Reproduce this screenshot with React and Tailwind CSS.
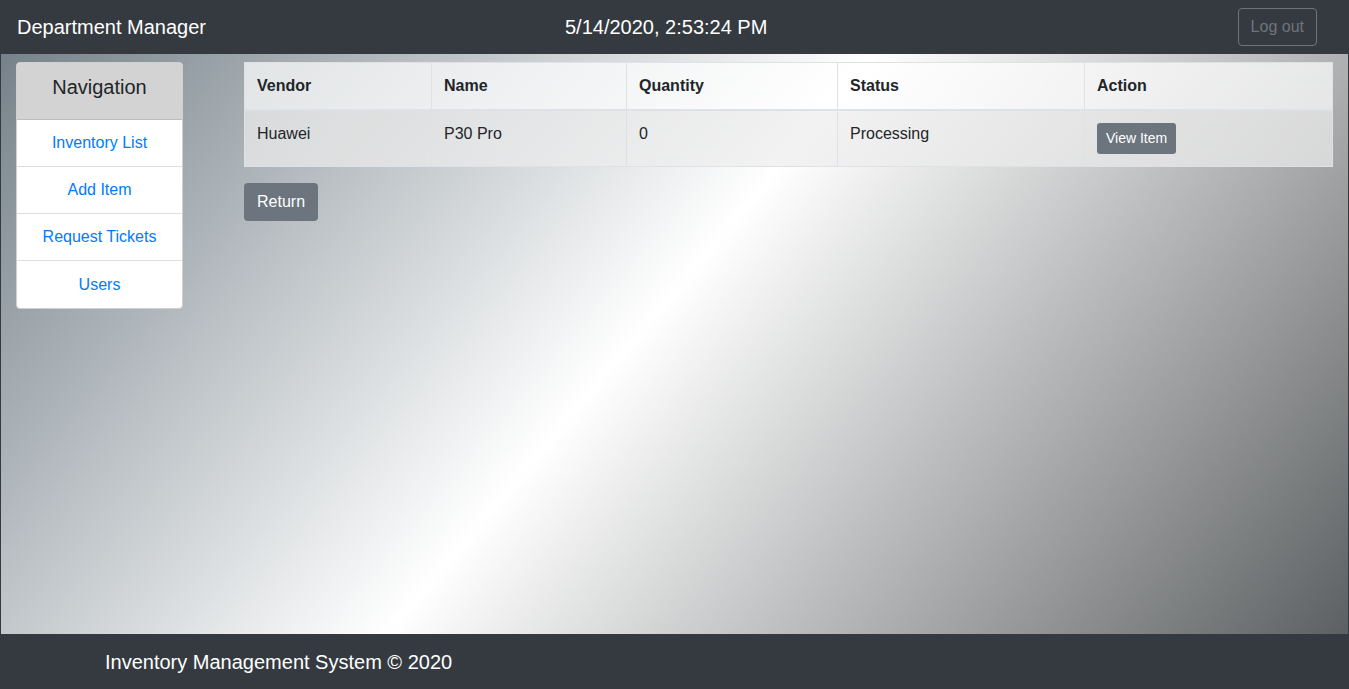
const NAV_LINKS = ['Inventory List', 'Add Item', 'Request Tickets', 'Users'];

const COLUMNS = [
  { label: 'Vendor', width: 'w-[187px]' },
  { label: 'Name', width: 'w-[195px]' },
  { label: 'Quantity', width: 'w-[211px]' },
  { label: 'Status', width: 'w-[247px]' },
  { label: 'Action', width: '' },
];

const ROWS = [{ vendor: 'Huawei', name: 'P30 Pro', quantity: 0, status: 'Processing' }];

const Header = () => (
  <header className="flex h-[54px] items-center bg-[#343a40] text-white">
    <span className="ml-4 text-[20px]">Department Manager</span>
    <span className="ml-[359px] text-[20px]">5/14/2020, 2:53:24 PM</span>
    <button
      type="button"
      className="ml-auto mr-[31px] h-[38px] rounded-[4px] border border-[#6c757d] px-3 text-[16px] text-[#6c757d]"
    >
      Log out
    </button>
  </header>
);

const Sidebar = () => (
  <aside className="w-[167px] shrink-0 overflow-hidden rounded-[4px] border border-[#d0d0d0] bg-white">
    <div className="h-[57px] border-b border-[#bdbdbd] bg-[#d3d3d3] pt-[12px] text-center text-[20px] leading-6 text-[#212529]">
      Navigation
    </div>
    {NAV_LINKS.map((link, i) => (
      <a
        key={link}
        href="#"
        className={`flex h-[47px] items-center justify-center text-[16px] text-[#007bff] ${
          i < NAV_LINKS.length - 1 ? 'border-b border-[#dedede]' : ''
        }`}
      >
        {link}
      </a>
    ))}
  </aside>
);

const ItemsTable = () => (
  <table className="w-full border-collapse bg-white/70 text-left text-[16px] text-[#212529]">
    <thead>
      <tr>
        {COLUMNS.map((col) => (
          <th
            key={col.label}
            className={`${col.width} border border-b-2 border-[#dee2e6] px-3 pb-[11px] pt-[11px] font-bold leading-6`}
          >
            {col.label}
          </th>
        ))}
      </tr>
    </thead>
    <tbody>
      {ROWS.map((row) => (
        <tr key={row.name} className="bg-black/5">
          <td className="border border-[#dee2e6] px-3 pb-[19px] pt-[11px] align-top leading-6">{row.vendor}</td>
          <td className="border border-[#dee2e6] px-3 pb-[19px] pt-[11px] align-top leading-6">{row.name}</td>
          <td className="border border-[#dee2e6] px-3 pb-[19px] pt-[11px] align-top leading-6">{row.quantity}</td>
          <td className="border border-[#dee2e6] px-3 pb-[19px] pt-[11px] align-top leading-6">{row.status}</td>
          <td className="border border-[#dee2e6] px-3 py-3 align-top">
            <button
              type="button"
              className="h-[31px] rounded-[3px] bg-[#6c757d] px-[9px] text-[14px] text-white"
            >
              View Item
            </button>
          </td>
        </tr>
      ))}
    </tbody>
  </table>
);

export default function App() {
  return (
    <div
      className="flex min-h-[689px] flex-col bg-[#343a40] px-px"
      style={{ fontFamily: '"Liberation Sans", Arial, sans-serif' }}
    >
      <Header />
      <main className="flex h-[580px] gap-[61px] bg-[linear-gradient(130deg,#76828a_0%,#ffffff_47.6%,#5d6062_100%)] pl-[15px] pr-[15px] pt-2">
        <div>
          <Sidebar />
        </div>
        <div className="flex-1">
          <ItemsTable />
          <button
            type="button"
            className="mt-4 h-[38px] rounded-[4px] bg-[#6c757d] px-[13px] text-[16px] text-white"
          >
            Return
          </button>
        </div>
      </main>
      <footer className="flex h-[55px] items-center bg-[#343a40] pl-[104px] text-[20px] text-white">
        Inventory Management System © 2020
      </footer>
    </div>
  );
}
